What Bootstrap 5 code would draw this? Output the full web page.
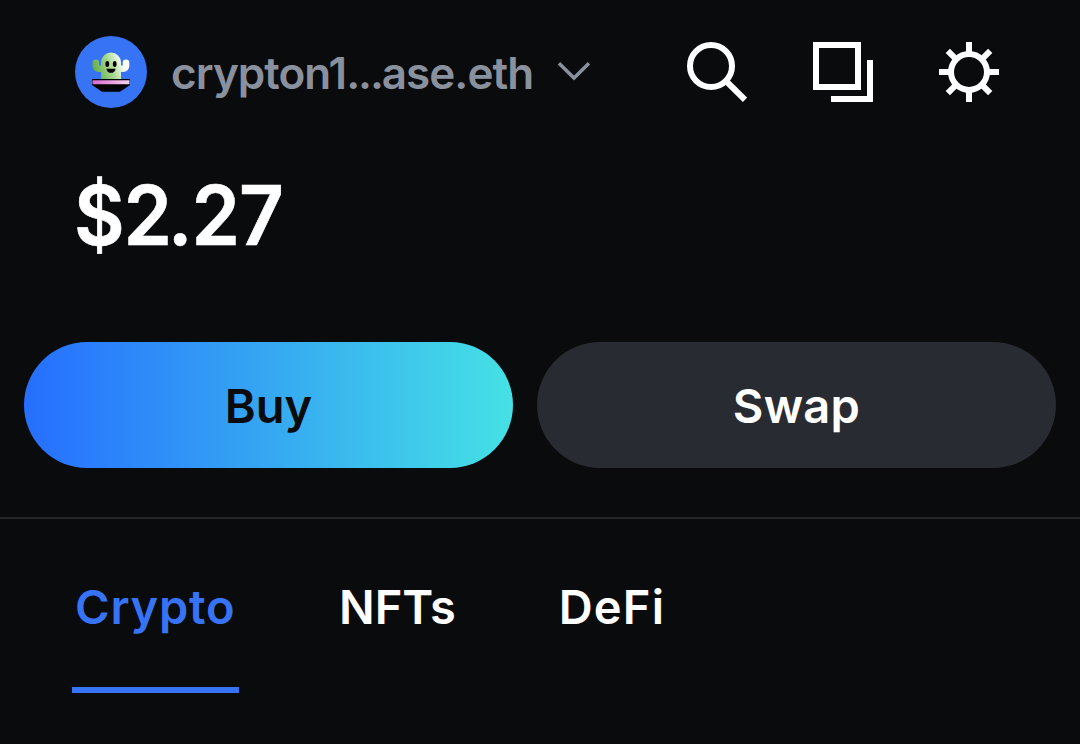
<!DOCTYPE html>
<html lang="en">
<head>
    <meta charset="UTF-8">
    <meta name="viewport" content="width=device-width, initial-scale=1.0">
    <title>Wallet</title>
    <link href="https://cdn.jsdelivr.net/npm/bootstrap@5.3.2/dist/css/bootstrap.min.css" rel="stylesheet">
    <style>
        body { background: #0a0b0d; color: #fff; font-family: Inter, "Liberation Sans", sans-serif; font-weight: 600; overflow: hidden; }
        .wallet-bar { height: 144px; padding: 0 81px 0 75px; }
        .address { color: #8a919e; font-size: 44px; line-height: 60px; letter-spacing: -.95px; margin-left: 24px; width: 386px; padding-top: 1px; white-space: nowrap; }
        .address .dots { letter-spacing: -2.2px; }
        .actions { gap: 66px; }
        .balance { font-size: 82px; line-height: 100px; padding: 22px 74px 0; height: 198px; }
        .balance .amount { display: inline-block; transform: scaleX(.95); transform-origin: left; letter-spacing: -1.2px; -webkit-text-stroke: .6px #fff; }
        .balance .whole { letter-spacing: -4.5px; }
        .pills { padding: 0 24px; gap: 24px; height: 175px; }
        .pill { height: 126px; font-size: 47px; font-weight: 600; border: 0; padding-top: 8px; }
        .pill-buy { width: 489px; background: linear-gradient(90deg, #266eff, #45e1e5); color: #0a0b0d; }
        .pill-swap { width: 519px; background: #282b31; color: #fff; letter-spacing: .3px; }
        .wallet-tabs { border-top: 2px solid #24262a; padding: 0 72px; gap: 96px; }
        .wallet-tabs a { height: 174px; padding: 58px 4px 0; font-size: 47px; line-height: 60px; color: #fff; text-decoration: none; border-bottom: 6px solid transparent; }
        .wallet-tabs a.active { width: 167px; padding-left: 3px; letter-spacing: .75px; color: #3773f5; border-color: #3773f5; }
        .wallet-tabs a:last-child { padding-left: 3px; letter-spacing: 1.2px; }
    </style>
</head>
<body>
    <header class="wallet-bar d-flex align-items-center">
        <svg width="72" height="72" viewBox="0 0 72 72">
            <defs>
                <linearGradient id="skin" gradientUnits="userSpaceOnUse" x1="18" y1="38" x2="50" y2="26">
                    <stop offset="0" stop-color="#58a83e"/>
                    <stop offset=".55" stop-color="#a8d890"/>
                    <stop offset=".95" stop-color="#fff"/>
                </linearGradient>
                <linearGradient id="rim">
                    <stop offset="0" stop-color="#d66ad0"/>
                    <stop offset="1" stop-color="#f8d3ec"/>
                </linearGradient>
            </defs>
            <circle cx="36" cy="36" r="36" fill="#3773f5"/>
            <path d="M26 43.500V36h-2.500a6 6 0 0 1-6-6v-3.300a3.300 3.300 0 0 1 6.600 0v2.800H26V26.500a10 10 0 0 1 20 0v3h1.700v-2.800a3.300 3.300 0 0 1 6.600 0V30a6 6 0 0 1-6 6H46v7.500z" fill="url(#skin)"/>
            <ellipse cx="32.300" cy="28" rx="1.900" ry="3"/>
            <ellipse cx="39.700" cy="28" rx="1.900" ry="3"/>
            <path d="M31.500 32.800h9a4.500 4 0 0 1-9 0z"/>
            <path d="M17 43h38v6l-10 6.700H27L17 49z"/>
            <path d="M17.500 44.200h37v4.100h-37z" fill="url(#rim)"/>
        </svg>
        <span class="address">crypton1<span class="dots">...</span>ase.eth</span>
        <svg width="34" height="24" viewBox="557 60 34 24" fill="none" stroke="#8a919e" stroke-width="3.500">
            <path d="M559 63.300 574 78l15-14.700"/>
        </svg>
        <div class="actions d-flex ms-auto">
            <svg width="60" height="60" fill="none" stroke="#fff" stroke-width="6">
                <circle cx="24" cy="24" r="21"/>
                <path d="M39 39l19 18.800"/>
            </svg>
            <svg width="60" height="60" fill="none" stroke="#fff" stroke-width="6">
                <path d="M3 3h42v42H3zM57 18v39H18"/>
            </svg>
            <svg width="60" height="60" fill="none" stroke="#fff" stroke-width="6">
                <circle cx="30" cy="30" r="18"/>
                <path d="M30 0v12M30 48v12M0 30h12M48 30h12M8.800 8.800l8.500 8.500M42.700 42.700l8.500 8.500M8.800 51.200l8.500-8.500M42.700 17.300l8.500-8.500"/>
            </svg>
        </div>
    </header>
    <div class="balance"><span class="amount">$<span class="whole">2</span>.27</span></div>
    <div class="pills d-flex">
        <button class="pill pill-buy btn rounded-pill">Buy</button>
        <button class="pill pill-swap btn rounded-pill">Swap</button>
    </div>
    <nav class="wallet-tabs d-flex">
        <a href="#" class="active">Crypto</a>
        <a href="#">NFTs</a>
        <a href="#">DeFi</a>
    </nav>
    <script src="https://cdn.jsdelivr.net/npm/bootstrap@5.3.2/dist/js/bootstrap.bundle.min.js"></script>
</body>
</html>
